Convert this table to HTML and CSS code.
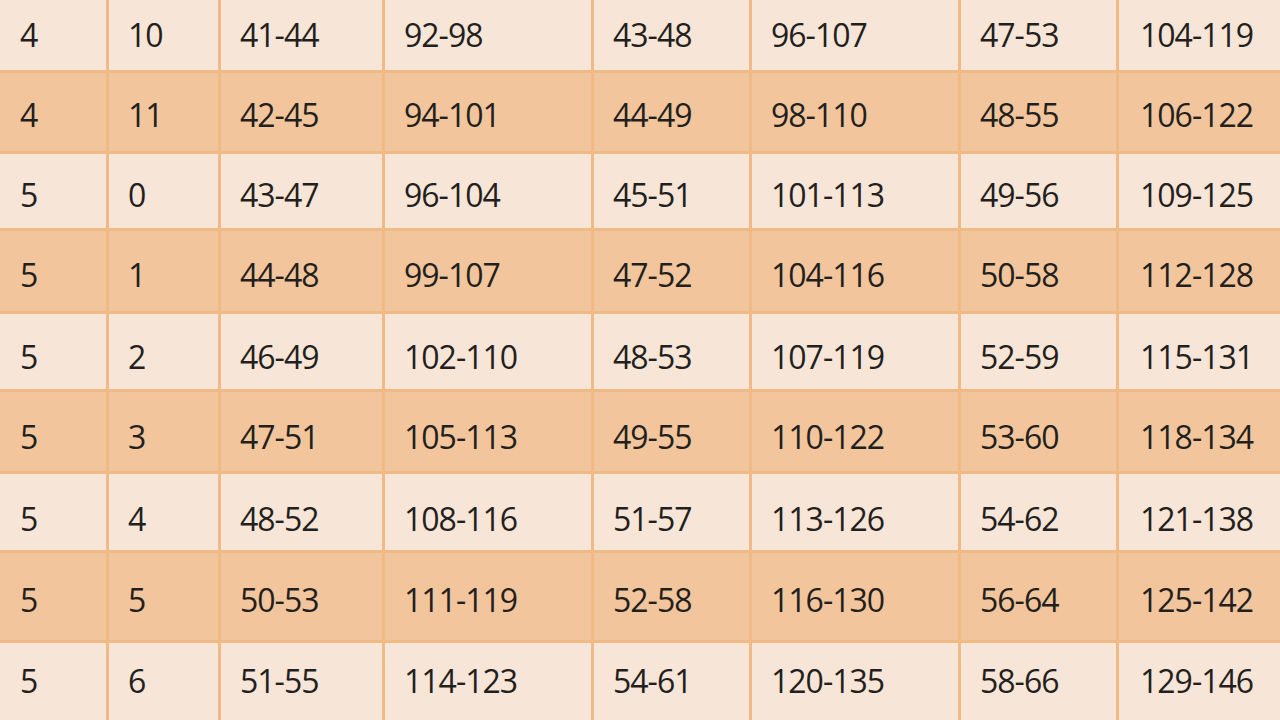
FILE: index.html
```html
<!DOCTYPE html>
<html lang="en">
<head>
<meta charset="utf-8">
<title>Size chart</title>
<link rel="stylesheet" href="styles.css">
</head>
<body>
<div class="table">
  <div class="row light r0"><div class="cell">4</div><div class="cell">10</div><div class="cell">41-44</div><div class="cell">92-98</div><div class="cell">43-48</div><div class="cell">96-107</div><div class="cell">47-53</div><div class="cell">104-119</div></div>
  <div class="row dark r1"><div class="cell">4</div><div class="cell">11</div><div class="cell">42-45</div><div class="cell">94-101</div><div class="cell">44-49</div><div class="cell">98-110</div><div class="cell">48-55</div><div class="cell">106-122</div></div>
  <div class="row light r2"><div class="cell">5</div><div class="cell">0</div><div class="cell">43-47</div><div class="cell">96-104</div><div class="cell">45-51</div><div class="cell">101-113</div><div class="cell">49-56</div><div class="cell">109-125</div></div>
  <div class="row dark r3"><div class="cell">5</div><div class="cell">1</div><div class="cell">44-48</div><div class="cell">99-107</div><div class="cell">47-52</div><div class="cell">104-116</div><div class="cell">50-58</div><div class="cell">112-128</div></div>
  <div class="row light r4"><div class="cell">5</div><div class="cell">2</div><div class="cell">46-49</div><div class="cell">102-110</div><div class="cell">48-53</div><div class="cell">107-119</div><div class="cell">52-59</div><div class="cell">115-131</div></div>
  <div class="row dark r5"><div class="cell">5</div><div class="cell">3</div><div class="cell">47-51</div><div class="cell">105-113</div><div class="cell">49-55</div><div class="cell">110-122</div><div class="cell">53-60</div><div class="cell">118-134</div></div>
  <div class="row light r6"><div class="cell">5</div><div class="cell">4</div><div class="cell">48-52</div><div class="cell">108-116</div><div class="cell">51-57</div><div class="cell">113-126</div><div class="cell">54-62</div><div class="cell">121-138</div></div>
  <div class="row dark r7"><div class="cell">5</div><div class="cell">5</div><div class="cell">50-53</div><div class="cell">111-119</div><div class="cell">52-58</div><div class="cell">116-130</div><div class="cell">56-64</div><div class="cell">125-142</div></div>
  <div class="row light r8"><div class="cell">5</div><div class="cell">6</div><div class="cell">51-55</div><div class="cell">114-123</div><div class="cell">54-61</div><div class="cell">120-135</div><div class="cell">58-66</div><div class="cell">129-146</div></div>
</div>
</body>
</html>
```
FILE: styles.css
```css
html, body {
  margin: 0;
  padding: 0;
  width: 1280px;
  height: 720px;
  overflow: hidden;
  background: #f7e5d8;
}

.table {
  display: flex;
  flex-direction: column;
  gap: 3px;
  background: #f0ba87;
  width: 1280px;
}

.row {
  display: grid;
  grid-template-columns: 106px 109px 161px 206px 155px 206px 155px 161px;
  column-gap: 3px;
}

.cell {
  box-sizing: border-box;
  padding-left: 19px;
  font-family: "Open Sans", Lato, sans-serif;
  font-size: 32px;
  line-height: 32px;
  letter-spacing: -1px;
  color: #231f1c;
}

.row .cell:first-child { padding-left: 20px; }
.row .cell:last-child { padding-left: 21px; }

.light .cell { background: #f7e5d8; }
.dark .cell { background: #f2c59c; }

.r0 .cell { height: 70px; padding-top: 19px; }
.r1 .cell { height: 78px; padding-top: 26px; }
.r2 .cell { height: 74px; padding-top: 25px; }
.r3 .cell { height: 80px; padding-top: 28px; }
.r4 .cell { height: 75px; padding-top: 27px; }
.r5 .cell { height: 79px; padding-top: 29px; }
.r6 .cell { height: 76px; padding-top: 29px; }
.r7 .cell { height: 87px; padding-top: 31px; }
.r8 .cell { height: 77px; padding-top: 22px; }
```
